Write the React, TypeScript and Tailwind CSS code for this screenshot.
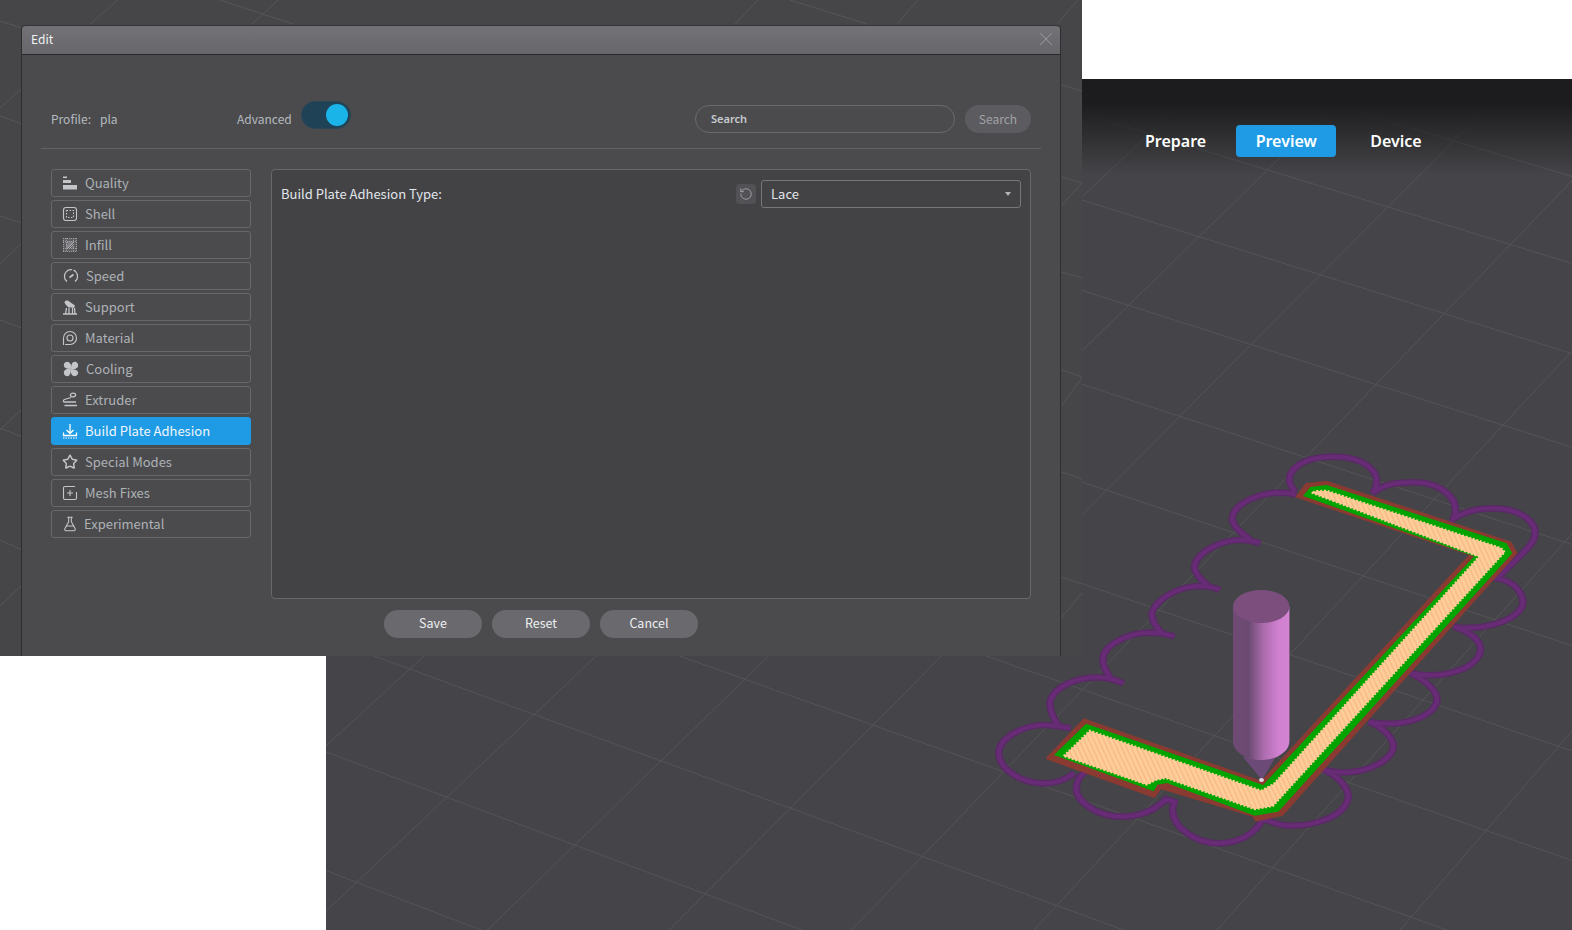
import type { ReactNode } from "react";
import { FlaskConical, RotateCcw, Star, X } from "lucide-react";

type Pt = [number, number];

// perspective fit of the build plate grid, from four nodes read off the screenshot
const quad: Pt[] = [
  [1199, 236.7],
  [1570, 353],
  [1136.8, 819.3],
  [744.8, 679.3],
];

function project(i: number, j: number): Pt {
  const u = i / 3;
  const v = (j - 1) / 6;
  const [[x0, y0], [x1, y1], [x2, y2], [x3, y3]] = quad;
  const dx1 = x1 - x2;
  const dx2 = x3 - x2;
  const dx3 = x0 - x1 + x2 - x3;
  const dy1 = y1 - y2;
  const dy2 = y3 - y2;
  const dy3 = y0 - y1 + y2 - y3;
  const den = dx1 * dy2 - dy1 * dx2;
  const g = (dx3 * dy2 - dx2 * dy3) / den;
  const h = (dx1 * dy3 - dy1 * dx3) / den;
  const w = g * u + h * v + 1;
  return [
    ((x1 - x0 + g * x1) * u + (x3 - x0 + h * x3) * v + x0) / w,
    ((y1 - y0 + g * y1) * u + (y3 - y0 + h * y3) * v + y0) / w,
  ];
}

const gridLines: [Pt, Pt][] = [];
for (let j = -2; j <= 12; j++) gridLines.push([project(-5, j), project(9, j)]);
for (let i = -5; i <= 9; i++) gridLines.push([project(i, -2), project(i, 12)]);

// the older viewport still peeks out around the dialog
const strayLines: number[][] = [
  [220, 0, 293, 24],
  [118, 0, 90, 24],
  [278, 0, 252, 24],
  [758, 0, 735, 24],
  [790, 0, 867, 24],
  [918, 0, 897, 24],
  [1078, 0, 1057, 24],
  [0, 21, 22, 28],
  [22, 88, 0, 108],
  [0, 116, 22, 124],
  [0, 216, 22, 223],
  [22, 243, 0, 264],
  [0, 320, 22, 328],
  [22, 409, 0, 430],
  [0, 428, 22, 437],
  [0, 540, 22, 550],
  [22, 585, 0, 606],
  [1062, 85, 1082, 91],
  [1062, 177, 1082, 183],
  [1082, 183, 1062, 205],
  [1062, 272, 1082, 278],
  [1062, 370, 1082, 377],
  [1082, 378, 1062, 405],
  [1062, 472, 1082, 479],
  [1061, 577, 1082, 584],
  [1082, 593, 1061, 618],
];

const lacePath =
  "M835 155C790 100 850 50 935 50C1020 50 1075 100 1040 160" +
  "C1070 130 1110 127 1150 127C1220 127 1275 175 1255 235" +
  "C1290 210 1330 205 1360 205C1430 205 1475 245 1470 285C1468 315 1430 345 1370 415" +
  "C1420 425 1440 465 1438 490C1432 540 1330 575 1255 560" +
  "C1310 580 1330 610 1325 635C1315 685 1230 720 1140 700" +
  "C1190 725 1215 760 1210 785C1200 830 1120 865 1030 845" +
  "C1075 865 1097 900 1095 925C1085 970 1000 1015 910 990" +
  "C955 1010 978 1050 975 1075C965 1130 880 1165 800 1155C780 1150 765 1145 750 1135" +
  "C730 1185 680 1210 630 1210C570 1210 510 1160 510 1110C510 1095 515 1088 522 1088L492 1078" +
  "C460 1115 420 1130 375 1130C310 1130 255 1085 255 1045C255 1025 265 1005 280 995" +
  "M250 1000C220 1025 190 1030 170 1030C105 1030 50 985 50 940C50 890 120 855 170 855C195 855 215 860 240 865" +
  "M210 860C190 830 185 810 185 790C190 745 250 712 310 712C335 712 360 720 380 730" +
  "M345 712C330 690 325 670 325 655C330 615 390 578 450 578C475 578 495 582 515 590" +
  "M480 578C465 560 455 540 455 520C465 480 520 440 580 438C600 438 620 442 635 450" +
  "M605 438C585 420 568 400 568 378C575 335 640 300 690 300C710 300 725 303 742 310" +
  "M715 298C690 280 668 255 668 235C672 190 740 158 795 158C810 158 825 160 838 165";

function BuildPlate() {
  return (
    <svg className="absolute inset-0" width={1572} height={930} viewBox="0 0 1572 930">
      <defs>
        <pattern id="infill" width="12" height="12" patternUnits="userSpaceOnUse" patternTransform="rotate(-22)">
          <rect width="12" height="12" fill="#ffcd9a" />
          <rect width="4" height="12" fill="#f7bb85" />
        </pattern>
        <linearGradient id="rod" x1="0" x2="1" y1="0" y2="0">
          <stop offset="0" stopColor="#6f4b74" />
          <stop offset="0.28" stopColor="#6b4a72" />
          <stop offset="0.36" stopColor="#7f5585" />
          <stop offset="0.55" stopColor="#ad6cae" />
          <stop offset="0.8" stopColor="#cf80cf" />
          <stop offset="1" stopColor="#d384d4" />
        </linearGradient>
      </defs>
      {gridLines.map(([a, b], n) => (
        <line key={n} x1={a[0]} y1={a[1]} x2={b[0]} y2={b[1]} stroke="#545458" strokeWidth="1" />
      ))}
      <g transform="translate(980 440) scale(.3775 .3333)">
        <path d={lacePath} fill="none" stroke="#592a65" strokeWidth="20" />
        <path d={lacePath} fill="none" stroke="#682b76" strokeWidth="12" />
        {/* wall, inner wall, infill */}
        <path
          d="M176 952L275 835L745 1022L1295 345L835 172L862 130L918 122L1407 305L1424 340L802 1127L730 1145L722 1130L480 1048L462 1074L176 958Z"
          fill="#8b3a32"
        />
        <path
          d="M196 945L281 851L750 1035L1309 349L856 168L875 141L918 135L1395 310L1410 340L790 1115L728 1127L495 1029L470 1034L460 1054Z"
          fill="#00a400"
        />
        <path
          d="M222 948L291 872L745 1052L778 1032L1322 350L878 158L892 153L918 152L1380 324L1390 336L776 1098L728 1108L492 1014L466 1020L442 1034Z"
          fill="url(#infill)"
          stroke="#ffcd9a"
          strokeWidth="6"
          strokeDasharray="5 5"
        />
      </g>
      <path d="M1243 757L1275 758L1262 780Z" fill="#6b4a78" />
      <path d="M1233 606.5V741C1233 752 1246 760 1261 760C1276 760 1289.4 752 1289.4 741V606.5Z" fill="url(#rod)" />
      <ellipse cx="1261.2" cy="606.5" rx="28.2" ry="16.5" fill="#7b4e7d" />
      <ellipse cx="1261.5" cy="780" rx="2.5" ry="2" fill="#e4d4e4" />
    </svg>
  );
}

function Icon({ children }: { children: ReactNode }) {
  return (
    <svg width="16" height="16" viewBox="0 0 16 16" fill="none" stroke="currentColor" strokeWidth="1.1" className="shrink-0">
      {children}
    </svg>
  );
}

const petal = "M8.500 7.800C5 8 1 7.500 0.800 4.200C0.800 1.500 3.500 0.600 5 0.900C7.800 1.400 8.500 5 8.500 7.800Z";

const categories: { name: string; shift?: string; icon: ReactNode }[] = [
  {
    name: "Quality",
    icon: (
      <Icon>
        <g fill="currentColor" stroke="none">
          <rect x="1" y="1.500" width="4" height="1.600" />
          <rect x="1" y="5" width="8" height="3" />
          <rect x="1" y="10" width="14" height="4.500" />
        </g>
      </Icon>
    ),
  },
  {
    name: "Shell",
    icon: (
      <Icon>
        <rect x="1.500" y="1.500" width="13" height="13" rx="2.500" />
        <rect x="4.500" y="4.500" width="7" height="7" strokeDasharray="1.500 1.500" />
      </Icon>
    ),
  },
  {
    name: "Infill",
    icon: (
      <Icon>
        <g strokeWidth="0.8" opacity="0.8">
          <rect x="1" y="1" width="14" height="14" fill="currentColor" fillOpacity="0.2" stroke="none" />
          <path d="M1 1.500h14M1 4.500h14M1 11.500h14M1 14.500h14M1.500 1v14M4.500 1v14M11.500 1v14M14.500 1v14" strokeDasharray="1 1" />
          <path d="M4.500 6.500L6.500 4.500M4.500 9L9 4.500M4.500 11L11 4.500M5.500 11.500L11.500 5.500M7.500 11.500L11.500 7.500M10 11.500L11.500 10" strokeWidth="1" />
        </g>
      </Icon>
    ),
  },
  {
    name: "Speed",
    shift: "ml-px",
    icon: (
      <Icon>
        <path d="M4 13.500A6.600 6.600 0 1 1 12 13.500" strokeWidth="1.200" strokeDasharray="17 1.400" />
        <path d="M6.500 9.500L10.500 6.500" strokeWidth="1.600" />
      </Icon>
    ),
  },
  {
    name: "Support",
    icon: (
      <Icon>
        <path d="M2.500 3.500C3 1.500 5 1 6.500 2L13 6.500L12 9L6 8L4 6Z" fill="currentColor" stroke="none" />
        <path d="M1 15h14M3.500 15l1-6M7 15V8.500M10.500 15V9M13 15l-.5-6" strokeWidth="1.300" />
      </Icon>
    ),
  },
  {
    name: "Material",
    icon: (
      <Icon>
        <path d="M1.500 15V8A6.500 6.500 0 1 1 8 14.500H3" />
        <circle cx="8" cy="8" r="3" />
      </Icon>
    ),
  },
  {
    name: "Cooling",
    shift: "ml-px",
    icon: (
      <Icon>
        <g fill="currentColor" stroke="none">
          <path d={petal} />
          <path d={petal} transform="rotate(90 8 8)" />
          <path d={petal} transform="rotate(180 8 8)" />
          <path d={petal} transform="rotate(270 8 8)" />
        </g>
      </Icon>
    ),
  },
  {
    name: "Extruder",
    icon: (
      <Icon>
        <ellipse cx="11" cy="3" rx="2.600" ry="1.800" strokeWidth="1.300" />
        <path d="M9 5.500L2.500 7.500C1 8 1 10 2.500 10H14M2.500 13.500H15" strokeWidth="1.300" />
      </Icon>
    ),
  },
  {
    name: "Build Plate Adhesion",
    icon: (
      <Icon>
        <path d="M8 1v9M4.500 7L8 10.500L11.500 7M1.500 9.500V12.500H14.500V9.500" strokeWidth="1.300" />
        <path d="M1 15h14" strokeWidth="1" strokeDasharray="1.500 1" />
      </Icon>
    ),
  },
  {
    name: "Special Modes",
    icon: <Star size={16} strokeWidth={2.200} className="shrink-0" />,
  },
  {
    name: "Mesh Fixes",
    icon: (
      <Icon>
        <path d="M13 1.500H3A1.500 1.500 0 0 0 1.500 3V13A1.500 1.500 0 0 0 3 14.500H13A1.500 1.500 0 0 0 14.500 13V7" />
        <path d="M8 5v6M5 8h6" />
      </Icon>
    ),
  },
  {
    name: "Experimental",
    shift: "-mr-px",
    icon: <FlaskConical size={16} strokeWidth={1.600} className="shrink-0" />,
  },
];

const cjk = "font-['Noto_Sans_CJK_SC','Noto_Sans',sans-serif]";

export default function App() {
  return (
    <div className={`relative w-[1572px] h-[930px] overflow-hidden bg-[#454549] ${cjk}`}>
      <BuildPlate />

      {/* Older viewport behind the dialog */}
      <div className="absolute top-0 left-0 w-[1082px] h-[656px] bg-[#464649]">
        <svg width={1082} height={656} className="block">
          {strayLines.map(([x1, y1, x2, y2], n) => (
            <line key={n} x1={x1} y1={y1} x2={x2} y2={y2} stroke="#56565a" strokeWidth="1" />
          ))}
        </svg>
      </div>

      {/* Blank parts of the capture */}
      <div className="absolute top-0 left-[1082px] right-0 h-[79px] bg-white" />
      <div className="absolute top-[656px] left-0 w-[326px] bottom-0 bg-white" />

      {/* Top navigation */}
      <div className="absolute top-[79px] left-[1082px] right-0 h-[96px] bg-gradient-to-b from-[#1c1c1e] from-25% to-transparent pt-[46px] pl-[63px] flex items-start font-['Noto_Sans',sans-serif] font-semibold text-[16px] text-white">
        <div className="h-8 flex items-center">Prepare</div>
        <div className="h-8 w-[100px] ml-[30px] flex items-center justify-center rounded bg-[#1e9be4]">Preview</div>
        <div className="h-8 ml-[34px] flex items-center">Device</div>
      </div>

      {/* Dialog */}
      <div className="absolute left-[21px] top-[25px] w-[1040px] h-[631px] bg-[#4b4b4e] border-x border-[#2e2e31] rounded-t-[4px] flex flex-col">
        <div className="h-[30px] shrink-0 rounded-t-[4px] bg-gradient-to-b from-[#737377] to-[#67676b] border-t border-b border-t-[#343437] border-b-[#29292c] flex items-center justify-between pl-[9px] pr-[3px] pb-[2px] text-[12px] text-[#f0f2f4]">
          <span>Edit</span>
          <X size={22} strokeWidth={1.100} className="text-[#97979b]" />
        </div>

        <div className="flex-1 flex flex-col">
          <div className="h-[94px] ml-[19px] mr-[19px] shrink-0 border-b border-[#636367] pl-[10px] pr-[10px] flex items-end pb-[15px] text-[12px] text-[#b4babe]">
            <span className="w-[49px] h-[28px] leading-[28px]">Profile:</span>
            <span className="w-[137px] h-[28px] leading-[28px]">pla</span>
            <span className="h-[28px] leading-[28px]">Advanced</span>
            <div className="ml-[9px] mb-[4px] w-[50px] h-[28px] rounded-full bg-[#1f4257] border border-[#2d4655] relative">
              <div className="absolute right-[2px] top-[2px] w-[22px] h-[22px] rounded-full bg-[#1bb4e8]" />
            </div>
            <div className="ml-auto w-[260px] h-[28px] rounded-full border border-[#6a6a6e] pl-[15px] flex items-center font-['Noto_Sans',sans-serif] font-semibold text-[11px] text-[#c6cace]">
              Search
            </div>
            <div className="ml-[10px] w-[66px] h-[28px] rounded-full bg-[#5c5c60] flex items-center justify-center text-[#a2a2a6]">
              Search
            </div>
          </div>

          <div className="flex-1 flex pt-[20px] pl-[29px] pr-[29px] gap-[20px] min-h-0">
            <div className="w-[200px] shrink-0 flex flex-col gap-[3px]">
              {categories.map((c) => {
                const active = c.name === "Build Plate Adhesion";
                return (
                  <div
                    key={c.name}
                    className={`h-[28px] shrink-0 rounded-[3px] border pl-[10px] pb-px flex items-center gap-[7px] text-[13px] ${
                      active
                        ? "bg-[#1e9be4] border-[#1e9be4] text-[#f2f6fa]"
                        : "border-[#68686c] text-[#adb2b6]"
                    }`}
                  >
                    <span className={`flex ${c.shift ?? ""} ${active ? "text-white" : "text-[#c4c5c9]"}`}>{c.icon}</span>
                    <span>{c.name}</span>
                  </div>
                );
              })}
            </div>

            <div className="flex-1 flex flex-col">
              <div className="h-[430px] shrink-0 rounded-[4px] border border-[#68686c] bg-[#434346] pt-[10px] pl-[9px] pr-[9px] flex items-start">
                <span className="h-[28px] leading-[27px] text-[13px] text-[#e2e6ea]">Build Plate Adhesion Type:</span>
                <div className="ml-auto mt-[4px] w-[20px] h-[20px] rounded bg-[#525256] flex items-center justify-center text-[#a4a4a8]">
                  <RotateCcw size={14} strokeWidth={1.500} />
                </div>
                <div className="ml-[5px] w-[260px] h-[28px] rounded-[3px] border border-[#77777b] pl-[9px] pr-[9px] flex items-center justify-between text-[13px] text-[#e2e6ea]">
                  <span>Lace</span>
                  <span className="w-0 h-0 border-x-[3.500px] border-x-transparent border-t-[4px] border-t-[#b4b4b8]" />
                </div>
              </div>
              <div className="mt-[11px] pl-[113px] flex gap-[10px] text-[12.500px] text-[#eceef0]">
                <div className="w-[98px] h-[28px] pb-px rounded-full bg-[#6a6a6e] flex items-center justify-center">Save</div>
                <div className="w-[98px] h-[28px] pb-px rounded-full bg-[#6a6a6e] flex items-center justify-center">Reset</div>
                <div className="w-[98px] h-[28px] pb-px rounded-full bg-[#6a6a6e] flex items-center justify-center">Cancel</div>
              </div>
            </div>
          </div>
        </div>
      </div>
    </div>
  );
}
